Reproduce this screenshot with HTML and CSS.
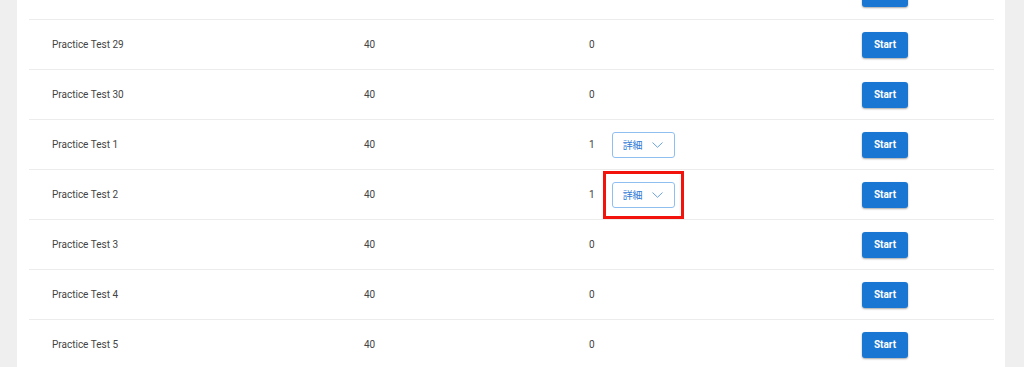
FILE: index.html
```html
<!DOCTYPE html>
<html lang="ja">
<head>
    <meta charset="UTF-8">
    <meta name="viewport" content="width=device-width, initial-scale=1.0">
    <title>Practice Tests</title>
    <link rel="stylesheet" href="styles.css">
</head>
<body>
    <div class="card">
        <div class="row">
            <div class="name"></div>
            <div class="qs"></div>
            <div class="count"></div>
            <div class="action"><button class="start"></button></div>
        </div>
        <div class="row">
            <div class="name">Practice Test 29</div>
            <div class="qs">40</div>
            <div class="count">0</div>
            <div class="action"><button class="start">Start</button></div>
        </div>
        <div class="row">
            <div class="name">Practice Test 30</div>
            <div class="qs">40</div>
            <div class="count">0</div>
            <div class="action"><button class="start">Start</button></div>
        </div>
        <div class="row">
            <div class="name">Practice Test 1</div>
            <div class="qs">40</div>
            <div class="count">1
                <span class="detail-wrap">
                    <button class="detail">詳細
                        <svg width="11" height="6" viewBox="0 0 11 6"><path d="M0.5 0.5 L5.5 5.3 L10.5 0.5" fill="none" stroke="#6aa3e0" stroke-width="1"/></svg>
                    </button>
                </span>
            </div>
            <div class="action"><button class="start">Start</button></div>
        </div>
        <div class="row">
            <div class="name">Practice Test 2</div>
            <div class="qs">40</div>
            <div class="count">1
                <span class="detail-wrap">
                    <button class="detail">詳細
                        <svg width="11" height="6" viewBox="0 0 11 6"><path d="M0.5 0.5 L5.5 5.3 L10.5 0.5" fill="none" stroke="#6aa3e0" stroke-width="1"/></svg>
                    </button>
                    <span class="highlight"></span>
                </span>
            </div>
            <div class="action"><button class="start">Start</button></div>
        </div>
        <div class="row">
            <div class="name">Practice Test 3</div>
            <div class="qs">40</div>
            <div class="count">0</div>
            <div class="action"><button class="start">Start</button></div>
        </div>
        <div class="row">
            <div class="name">Practice Test 4</div>
            <div class="qs">40</div>
            <div class="count">0</div>
            <div class="action"><button class="start">Start</button></div>
        </div>
        <div class="row">
            <div class="name">Practice Test 5</div>
            <div class="qs">40</div>
            <div class="count">0</div>
            <div class="action"><button class="start">Start</button></div>
        </div>
    </div>
</body>
</html>
```

FILE: styles.css
```css
html, body{
    margin: 0;
    background: #efefef;
    overflow: hidden;
    height: 367px;
}
body{
    font-family: Roboto, "Noto Sans CJK JP", sans-serif;
    font-size: 10px;
    color: #444;
}
.card{
    margin: -30px 0 0 17px;
    width: 988px;
    padding: 0 11px 0 12px;
    box-sizing: border-box;
    background: #fff;
}
.row{
    display: grid;
    grid-template-columns: 312px 225px 273px auto;
    align-items: center;
    height: 50px;
    padding-left: 23px;
    border-bottom: 1px solid #ececec;
    box-sizing: border-box;
}
.count{
    display: flex;
    align-items: center;
}
.detail-wrap{
    position: relative;
    margin-left: 17px;
    display: inline-block;
}
.detail{
    display: flex;
    align-items: center;
    gap: 9px;
    width: 63px;
    height: 26px;
    padding: 0 0 0 10px;
    border: 1px solid #8fbff0;
    border-radius: 3px;
    background: #fff;
    color: #2f7bd6;
    font-family: "Noto Sans CJK JP", sans-serif;
    font-size: 10px;
    box-sizing: border-box;
}
.highlight{
    position: absolute;
    top: -11px;
    left: -9px;
    width: 81px;
    height: 48px;
    border: 3px solid #f2130d;
    box-sizing: border-box;
}
.start{
    width: 46px;
    height: 26px;
    border: none;
    border-radius: 3px;
    background: #1976d2;
    color: #fff;
    font-family: Roboto, sans-serif;
    font-weight: bold;
    font-size: 10px;
    box-shadow: 0 1px 2px rgba(0,0,0,.35);
}
```
